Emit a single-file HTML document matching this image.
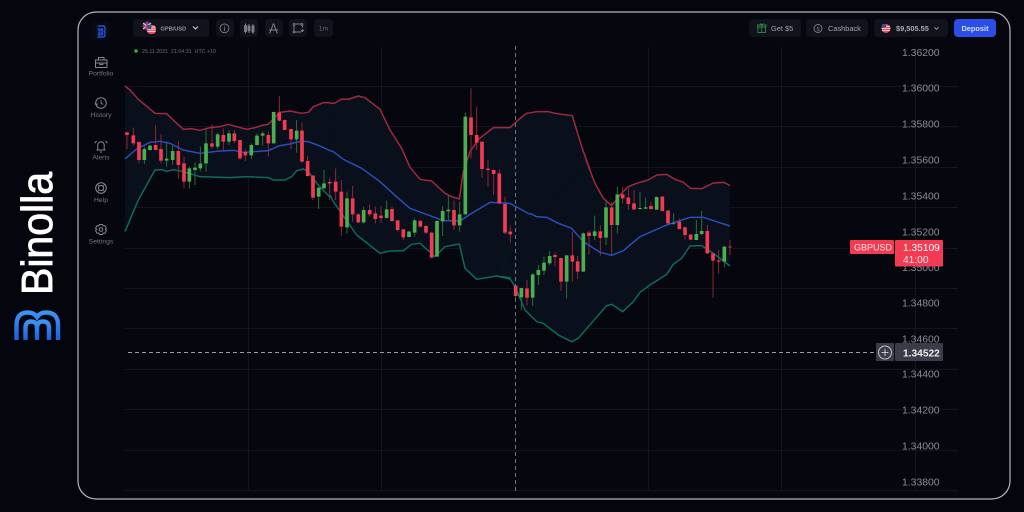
<!DOCTYPE html>
<html><head><meta charset="utf-8"><style>
html,body{margin:0;padding:0;background:#05060d;width:1024px;height:512px;overflow:hidden}
svg{display:block;filter:blur(.35px)}
text{font-family:"Liberation Sans",sans-serif}
</style></head><body>
<svg width="1024" height="512" viewBox="0 0 1024 512" xmlns="http://www.w3.org/2000/svg">
<defs><linearGradient id="lg" x1="0" y1="0" x2="0" y2="1"><stop offset="0" stop-color="#3b93f2"/><stop offset="1" stop-color="#1f5fe0"/></linearGradient></defs>
<rect width="1024" height="512" fill="#05060d"/>
<!-- brand -->
<text transform="translate(52 295) rotate(-90)" font-size="44" fill="#fff" stroke="#fff" stroke-width=".9" textLength="123" lengthAdjust="spacingAndGlyphs">Binolla</text>
<g fill="none" stroke="url(#lg)" stroke-width="4.4">
<path d="M16.500 340V325Q16.500 312.500 28 312.500Q34 312.500 37 317Q40 312.500 46 312.500Q58 312.500 58 325V340"/>
<path d="M25.500 340V328Q25.500 321.500 31 321.500Q37 321.500 37 328V340M37 328Q37 321.500 43 321.500Q49 321.500 49 328V340"/>
</g>
<!-- frame -->
<rect x="78" y="12" width="932" height="487" rx="18" fill="#06070e" stroke="#b4b5b9" stroke-width="1.200"/>
<!-- grid -->
<g stroke="#12141e" stroke-width="1" fill="none">
<path d="M125 86.500H958M125 126.500H958M125 167.500H958M125 207.500H958M125 248.500H958M125 288.500H958M125 328.500H958M125 369.500H958M125 409.500H958M125 450.500H958M125 490.500H958"/>
<path d="M248.500 47V490M381.500 47V490M648.500 47V490M781.500 47V490M915.500 47V490"/>
</g>
<!-- band fill -->
<g fill="#0a111c" fill-opacity=".92">
<path transform="translate(120 80) scale(.33333)" d="M15 18L30 30 55 58 105 100 140 101 165 125 190 148 215 146 240 151 270 143 300 140 325 133 350 140 380 148 405 143 430 135 445 133 465 112 480 97 510 93 545 100 565 97 580 80 610 68 630 68V352L590 310 565 275 550 267 530 272 515 290 495 300 460 300 445 293 380 290 330 293 240 290 190 275 160 269 140 274 125 269 105 270 55 360 15 455Z"/>
<path transform="translate(320 80) scale(.33333)" d="M30 70L45 69 65 57 85 58 115 48 135 53 180 88 210 150 245 205 270 262 300 298 335 303 375 340 395 350 418 357 430 275 450 215 475 178 520 143 570 143V597L530 588 470 598 435 565 418 492 375 500 345 530 300 490 275 493 250 512 210 513 180 520 110 465 40 365 30 345Z"/>
<path d="M510 127.300L516 121.700 526.700 113.300 536.700 111.700 548.300 111.700 555 113.300 572.300 115.700 581.700 146.700 586 160 500 277Z"/>
<path transform="translate(500 160) scale(.33333)" d="M258 0L285 70 310 115 335 137 360 105 385 80 410 70 445 60 470 45 500 43 525 58 550 67 572 85 605 86 640 69 672 67 690 77V318L640 280 605 257 570 258 545 295 520 313 500 343 450 375 420 397 400 425 368 455 335 433 320 437 265 500 235 535 215 545 175 525 130 490 110 485 75 450 45 380 28 353 0 350Z"/>
</g>
<!-- wicks -->
<g fill="none" stroke-width="2.600">
<g transform="translate(120 80) scale(.33333)">
<path stroke="#a3293a" d="M21 155V207M40 143V197M57 185V250M107 135V210M123 162V250M175 182V297M192 230V325M276 133V207M310 145V213M343 150V190M360 180V240M376 208V243M445 155V230M478 48V125M494 118V150M513 147V207M546 127V247M563 228V290M579 285V360"/>
<path stroke="#2f7a3c" d="M73 200V252M90 195V212M140 185V260M158 197V255M208 260V325M225 248V315M241 200V275M258 143V275M293 158V207M327 150V195M394 190V237M411 160V197M428 155V197M461 95V190M530 120V218M596 322V387"/>
</g>
<g transform="translate(320 80) scale(.33333)">
<path stroke="#a3293a" d="M29 295V360M47 265V360M64 300V467M98 318V425M115 400V430M149 373V410M166 380V430M183 378V428M216 380V425M233 420V455M250 447V480M301 420V442M318 435V462M335 455V535M402 362V450M453 25V235M470 80V210M486 185V293M504 240V320M521 268V345M538 267V372M555 350V463M571 437V488"/>
<path stroke="#2f7a3c" d="M12 270V325M81 335V460M131 380V430M200 362V415M267 452V473M284 415V470M351 420V530M368 378V468M385 347V420M419 365V455M436 97V403"/>
</g>
<g transform="translate(500 160) scale(.33333)">
<path stroke="#a3293a" d="M47 375V415M81 360V437M165 278V320M183 293V393M217 215V365M233 288V357M267 212V285M301 195V287M335 125V285M368 80V130M385 85V150M402 90V150M453 125V150M487 108V155M504 150V193M538 175V208M555 200V238M572 222V240M622 195V282M639 280V413M656 270V340M690 240V285"/>
<path stroke="#2f7a3c" d="M64 383V450M98 340V437M115 315V375M132 290V345M149 273V316M200 285V415M250 218V335M284 167V240M318 122V255M352 80V220M420 95V148M437 113V148M470 110V150M521 160V195M589 180V240M605 153V225M673 258V322"/>
</g>
</g>
<!-- bollinger lines -->
<g fill="none" stroke-width="4.400" stroke-linejoin="round">
<g transform="translate(120 80) scale(.33333)">
<path stroke="#0f6b5e" d="M15 455L55 360 105 270 125 269 140 274 160 269 190 275 240 290 330 293 380 290 445 293 460 300 495 300 515 290 530 272 550 267 565 275 590 310 630 352"/>
<path stroke="#2a4fb8" d="M15 237L50 207 90 187 120 184 150 190 190 210 240 220 300 213 340 211 370 217 445 212 475 198 510 192 540 184 565 185 600 198 630 212"/>
<path stroke="#a12a3e" d="M15 18L30 30 55 58 105 100 140 101 165 125 190 148 215 146 240 151 270 143 300 140 325 133 350 140 380 148 405 143 430 135 445 133 465 112 480 97 510 93 545 100 565 97 580 80 610 68 630 68"/>
</g>
<g transform="translate(320 80) scale(.33333)">
<path stroke="#0f6b5e" d="M30 345L40 365 110 465 180 520 210 513 250 512 275 493 300 490 345 530 375 500 418 492 435 565 470 598 530 588 570 597"/>
<path stroke="#2a4fb8" d="M30 212L40 215 70 238 125 265 180 305 235 355 270 385 330 407 370 422 420 423 450 403 510 367 570 370 630 403"/>
<path stroke="#a12a3e" d="M30 70L45 69 65 57 85 58 115 48 135 53 180 88 210 150 245 205 270 262 300 298 335 303 375 340 395 350 418 357 430 275 450 215 475 178 520 143 570 143 590 125"/>
</g>
<g transform="translate(510 90) scale(.33333)">
<path stroke="#a12a3e" d="M18 95L50 70 80 65 115 65 135 70 187 77 215 170 240 240"/>
</g>
<g transform="translate(500 160) scale(.33333)">
<path stroke="#0f6b5e" d="M0 350L28 353 45 380 75 450 110 485 130 490 175 525 215 545 235 535 265 500 320 437 335 433 368 455 400 425 420 397 450 375 500 343 520 313 545 295 570 258 605 257 640 280 690 318"/>
<path stroke="#2a4fb8" d="M90 160L110 170 140 172 175 190 215 205 250 245 300 277 335 286 370 272 420 230 500 195 570 172 610 172 650 185 690 198"/>
<path stroke="#a12a3e" d="M258 0L285 70 310 115 335 137 360 105 385 80 410 70 445 60 470 45 500 43 525 58 550 67 572 85 605 86 640 69 672 67 690 77"/>
</g>
</g>
<!-- bodies -->
<g fill="none" stroke-width="11">
<g transform="translate(120 80) scale(.33333)">
<path stroke="#f23b52" d="M21 157V165M40 166V190M57 186V240M107 195V210M123 207V242M175 213V255M192 250V305M276 190V200M310 165V185M343 160V183M360 180V235M376 216V226M445 165V190M478 97V122M494 120V150M513 147V178M546 152V245M563 243V288M579 287V353"/>
<path stroke="#4bae50" d="M73 207V240M90 197V210M140 236V242M158 213V240M208 265V305M225 263V270M241 251V265M258 190V250M293 163V200M327 160V185M394 195V226M411 167V195M428 160V167M461 96V190M530 152V178M596 323V350"/>
</g>
<g transform="translate(320 80) scale(.33333)">
<path stroke="#f23b52" d="M29 306V310M47 305V335M64 335V440M98 355V403M115 403V427M149 390V403M166 400V417M183 407V414M216 387V423M233 421V450M250 448V472M301 423V440M318 438V458M335 458V533M402 390V436M453 112V165M470 165V188M486 185V267M504 266V270M521 270V282M538 280V370M555 372V458M571 455V463"/>
<path stroke="#4bae50" d="M12 310V325M81 355V442M131 390V427M200 388V414M267 455V471M284 421V458M351 423V530M368 393V424M385 389V394M419 403V436M436 110V403"/>
</g>
<g transform="translate(500 160) scale(.33333)">
<path stroke="#f23b52" d="M47 377V408M81 385V413M165 285V291M183 294V365M217 286V305M233 304V335M267 218V228M301 214V234M335 142V195M368 103V115M385 113V132M402 130V148M453 138V147M487 110V153M504 152V190M538 185V207M555 202V225M572 224V239M622 213V280M639 280V302M656 301V305M690 260V262"/>
<path stroke="#4bae50" d="M64 384V412M98 343V413M115 330V345M132 308V332M149 288V310M200 286V365M250 220V335M284 214V228M318 142V233M352 103V195M420 144V147M437 142V146M470 111V149M521 190V192M589 222V240M605 213V222M673 260V305"/>
</g>
</g>
<!-- crosshair -->
<path d="M515.500 46V491" stroke="#70727c" stroke-width="1" stroke-dasharray="4 3"/>
<path d="M128 352.500H876" stroke="#9a9ca4" stroke-width="1" stroke-dasharray="4 3"/>
<!-- axis -->
<g font-size="10.400" fill="#8b8d95">
<text x="902" y="56">1.36200</text><text x="902" y="91.500">1.36000</text><text x="902" y="127.500">1.35800</text><text x="902" y="163.500">1.35600</text><text x="902" y="199.500">1.35400</text><text x="902" y="235.500">1.35200</text><text x="902" y="271">1.35000</text><text x="902" y="306.500">1.34800</text><text x="902" y="342.500">1.34600</text><text x="902" y="377.500">1.34400</text><text x="902" y="413.500">1.34200</text><text x="902" y="449.500">1.34000</text><text x="902" y="485.500">1.33800</text>
</g>
<!-- price tags -->
<rect x="850" y="240" width="44" height="14" rx="1" fill="#f23b52"/>
<rect x="895" y="240" width="48" height="26.500" rx="1" fill="#f23b52"/>
<text x="854" y="250.500" font-size="9.200" fill="#fde8ea" textLength="38" lengthAdjust="spacingAndGlyphs">GBPUSD</text>
<text x="903" y="251" font-size="10.200" fill="#fff">1.35109</text>
<text x="903" y="263" font-size="10.200" fill="#fde8ea">41:00</text>
<rect x="876" y="343" width="18" height="18" rx="1" fill="#3a3d49"/>
<rect x="895" y="343" width="48" height="18" rx="1" fill="#3a3d49"/>
<circle cx="885" cy="352.500" r="6.500" fill="none" stroke="#c4c5ca" stroke-width="1"/>
<path d="M881.500 352.500h7M885 349v7" stroke="#c4c5ca" stroke-width="1"/>
<text x="903" y="356.500" font-size="10.200" font-weight="700" fill="#eceded">1.34522</text>
<!-- status -->
<circle cx="136" cy="51" r="1.800" fill="#2fae4a"/>
<text x="142" y="53" font-size="5.300" fill="#6c6e77" xml:space="preserve">25.11.2021  21:04:31  UTC +10</text>
<!-- sidebar -->
<rect x="92" y="22" width="18" height="18" rx="3" fill="#090b13"/>
<path d="M97.500 26H103Q105 26 105 28V30Q105 31.500 103.500 31.500Q105 31.500 105 33V35Q105 37 103 37H97.500M97.500 29H102.500V30.800H98M98 33H102.500V34.800H97.500" fill="none" stroke="#2350d8" stroke-width="1.400"/>
<g fill="none" stroke="#85878f" stroke-width="1">
<path d="M95.500 60h11.500v7.500h-11.500zM98.500 60v-2.500h5.500v2.500M95.500 63h11.500M99.800 63v1.500h3V63"/>
<circle cx="101" cy="103" r="5.300"/><path d="M101 100v3l2.200 1.500M94.800 103.500l1.500 1.500 1.500-1.500" stroke-width=".9"/>
<path d="M96.500 150h9M97.800 150v-5a3.200 3.200 0 0 1 6.400 0v5M100 152h2M96.500 141l-1.800 2.200M105.500 141l1.800 2.200"/>
<circle cx="101" cy="188" r="5.300"/><circle cx="101" cy="188" r="2.600"/><path d="M97.400 184.400l1.800 1.800M104.600 184.400l-1.800 1.800M97.400 191.600l1.800-1.800M104.600 191.600l-1.800-1.800" stroke-width=".7"/>
<circle cx="101" cy="229.500" r="1.800"/><path d="M99.500 224.500h3l.7 1.500 1.700-.3 1.500 2.600-1.100 1.200 1.100 1.200-1.500 2.600-1.700-.3-.7 1.500h-3l-.7-1.500-1.700.3-1.500-2.600 1.100-1.200-1.100-1.200 1.500-2.600 1.700.3z"/>
</g>
<g font-size="6.800" fill="#75777f" text-anchor="middle">
<text x="101" y="75.500">Portfolio</text><text x="101" y="117">History</text><text x="101" y="159.500">Alerts</text><text x="101" y="202">Help</text><text x="101" y="243.500">Settings</text>
</g>
<!-- toolbar -->
<g fill="#11131c">
<rect x="133" y="19" width="76" height="18" rx="3"/>
<rect x="216" y="19" width="18" height="18" rx="4"/><rect x="240" y="19" width="18" height="18" rx="4"/><rect x="265" y="19" width="18" height="18" rx="4"/><rect x="289" y="19" width="18" height="18" rx="4"/><rect x="314" y="19" width="19" height="18" rx="4"/>
<rect x="749" y="19" width="52" height="18" rx="4"/><rect x="806" y="19" width="62" height="18" rx="4"/><rect x="874" y="19" width="74" height="18" rx="4"/>
</g>
<rect x="954" y="19" width="42" height="18" rx="4" fill="#2b4fe6"/>
<!-- flags -->
<circle cx="147" cy="26" r="4.500" fill="#2d3f8a"/><path d="M143 23l8 6M151 23l-8 6" stroke="#e8b8c0" stroke-width="1.200"/><path d="M147 21.500v9M142.500 26h9" stroke="#e0384e" stroke-width="1.200"/>
<rect x="147" y="25" width="9" height="9" rx="3.500" fill="#e8505f"/><path d="M147.500 27h8M147.500 29.200h8M147.500 31.400h8" stroke="#f4e4e6" stroke-width=".9"/><rect x="147" y="25" width="4.500" height="4" rx="1.500" fill="#35509c"/>
<text x="160.500" y="30.500" font-size="5.600" font-weight="700" fill="#9698a0">GPB/USD</text>
<path d="M193 26.500l2.500 2.500 2.500-2.500" fill="none" stroke="#d0d1d5" stroke-width="1.100"/>
<g fill="none" stroke="#7d7f87" stroke-width=".9">
<circle cx="224.500" cy="28.300" r="4.400"/><path d="M224.500 27.500v3.200M224.500 25.800v.8"/>
<path d="M245.500 23.500v10M249 24v9M253 24v10"/><rect x="244.500" y="25.500" width="2" height="6" fill="#7d7f87"/><rect x="248" y="26" width="2" height="4.800" fill="#7d7f87"/><rect x="252" y="26" width="2" height="6" fill="#7d7f87"/>
<path d="M273.500 23.500l-3.800 10M273.500 23.500l3.800 10M269 30h9" stroke-width="1"/>
<path d="M295 24h6M295 32h6M294 25.500v5.500M302.500 25.500v2M302 31v1" stroke-width="1"/><circle cx="294" cy="24.500" r=".9"/><circle cx="302" cy="24.500" r=".9"/><circle cx="294" cy="32" r=".9"/><path d="M301 30.500h3M302.500 29v3"/>
</g>
<text x="323.500" y="30.500" font-size="6.600" fill="#6a6c74" text-anchor="middle">1m</text>
<!-- right buttons -->
<g fill="none" stroke="#2f8a45" stroke-width=".9"><rect x="758" y="27" width="7.500" height="5.500"/><path d="M757.500 25h8.500v2h-8.500zM761.700 25v7.500M761.700 25l-1.800-1.500M761.700 25l1.800-1.500"/></g>
<text x="771" y="31" font-size="7.400" fill="#a3a5ac">Get $5</text>
<circle cx="818" cy="28.500" r="4" fill="none" stroke="#7d7f87" stroke-width=".9"/><text x="818" y="30.800" font-size="5.600" fill="#7d7f87" text-anchor="middle">$</text>
<text x="828" y="31" font-size="7.400" fill="#a3a5ac">Cashback</text>
<circle cx="886" cy="28.500" r="4.500" fill="#e8505f"/><path d="M882 26.500h8M881.600 28.500h8.800M882 30.500h8" stroke="#f4e4e6" stroke-width=".8"/><rect x="882" y="24" width="4" height="3.800" rx="1" fill="#35509c"/>
<text x="896" y="31" font-size="7.400" font-weight="700" fill="#a9abb2">$9,505.55</text>
<path d="M934.500 27.300l2 2 2-2" fill="none" stroke="#a9abb2" stroke-width=".9"/>
<text x="975" y="31" font-size="7.400" font-weight="700" fill="#d5dcfb" text-anchor="middle">Deposit</text>
</svg>
</body></html>
